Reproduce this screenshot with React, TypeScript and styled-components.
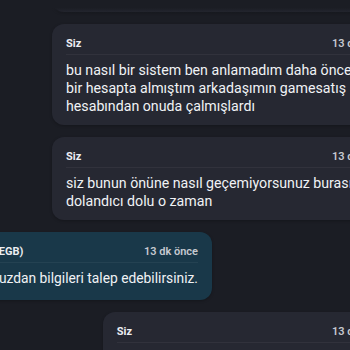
import styled, { createGlobalStyle, css } from "styled-components";

const GlobalStyle = createGlobalStyle`
  html, body {
    margin: 0;
    padding: 0;
    background: #1b1d24;
    overflow: hidden;
  }
`;

const Viewport = styled.div`
  position: relative;
  width: 350px;
  height: 350px;
  overflow: hidden;
  background: #1b1d24;
  font-family: Roboto, "Noto Sans", sans-serif;
  color: #e9ebf0;
`;

const TopFade = styled.div`
  position: absolute;
  top: 0;
  left: 0;
  right: 0;
  height: 14px;
  background: linear-gradient(to bottom, #1b1d24 0%, #1b1d24 55%, rgba(27, 29, 36, 0) 100%);
  pointer-events: none;
`;

const Thread = styled.div`
  width: 400px;
  margin-top: -71px;
  display: flex;
  flex-direction: column;
  gap: 12px;
`;

const mine = css`
  align-self: flex-end;
  max-width: 348px;
  padding-bottom: 10px;
  background: #262832;
`;

const agent = css`
  flex-shrink: 0;
  white-space: nowrap;
  padding-bottom: 13px;
  background: #193849;
`;

const Bubble = styled.div<{ $from: "me" | "agent" }>`
  box-sizing: border-box;
  padding: 12px 14px;
  border-radius: 12px;
  box-shadow: 0 1px 3px rgba(0, 0, 0, 0.25);
  ${({ $from }) => ($from === "me" ? mine : agent)}
`;

const AgentRow = styled.div`
  width: 212px;
  display: flex;
  justify-content: flex-end;
`;

const Header = styled.div`
  display: flex;
  justify-content: space-between;
  gap: 24px;
  font-size: 11px;
  line-height: 16px;
  font-weight: 700;
  padding-bottom: 2px;
  margin-bottom: 6px;
  border-bottom: 1px solid rgba(255, 255, 255, 0.05);
`;

const Author = styled.span`
  color: #eceef2;
`;

const Time = styled.span`
  color: #c6c9d0;
  font-weight: 600;
  white-space: nowrap;
`;

const Text = styled.div<{ $from: "me" | "agent" }>`
  font-size: ${({ $from }) => ($from === "me" ? "14.2px" : "13.8px")};
  line-height: 18px;
  color: #f0f2f5;
  padding-right: ${({ $from }) => ($from === "me" ? "28px" : "0")};
`;

type Message = { from: "me" | "agent"; author: string; time: string; text: string };

const messages: Message[] = [
  { from: "me", author: "Siz", time: "13 dk önce", text: "hesabım kapatıldı ve param da gitti şimdi ne yapacağım bilmiyorum" },
  { from: "me", author: "Siz", time: "13 dk önce", text: "bu nasıl bir sistem ben anlamadım daha önce bir hesapta almıştım arkadaşımın gamesatış hesabından onuda çalmışlardı" },
  { from: "me", author: "Siz", time: "13 dk önce", text: "siz bunun önüne nasıl geçemiyorsunuz burası dolandıcı dolu o zaman" },
  { from: "agent", author: "Destek Ekibi Ayşe (EGB)", time: "13 dk önce", text: "Destek formumuzdan bilgileri talep edebilirsiniz." },
  { from: "me", author: "Siz", time: "13 dk önce", text: "peki hesabımı ne zaman geri alabilirim" },
];

function MessageBubble({ m }: { m: Message }) {
  return (
    <Bubble $from={m.from}>
      <Header>
        <Author>{m.author}</Author>
        <Time>{m.time}</Time>
      </Header>
      <Text $from={m.from}>{m.text}</Text>
    </Bubble>
  );
}

export default function App() {
  return (
    <>
      <GlobalStyle />
      <Viewport>
        <Thread>
          {messages.map((m, i) =>
            m.from === "agent" ? (
              <AgentRow key={i}>
                <MessageBubble m={m} />
              </AgentRow>
            ) : (
              <MessageBubble key={i} m={m} />
            )
          )}
        </Thread>
        <TopFade />
      </Viewport>
    </>
  );
}
